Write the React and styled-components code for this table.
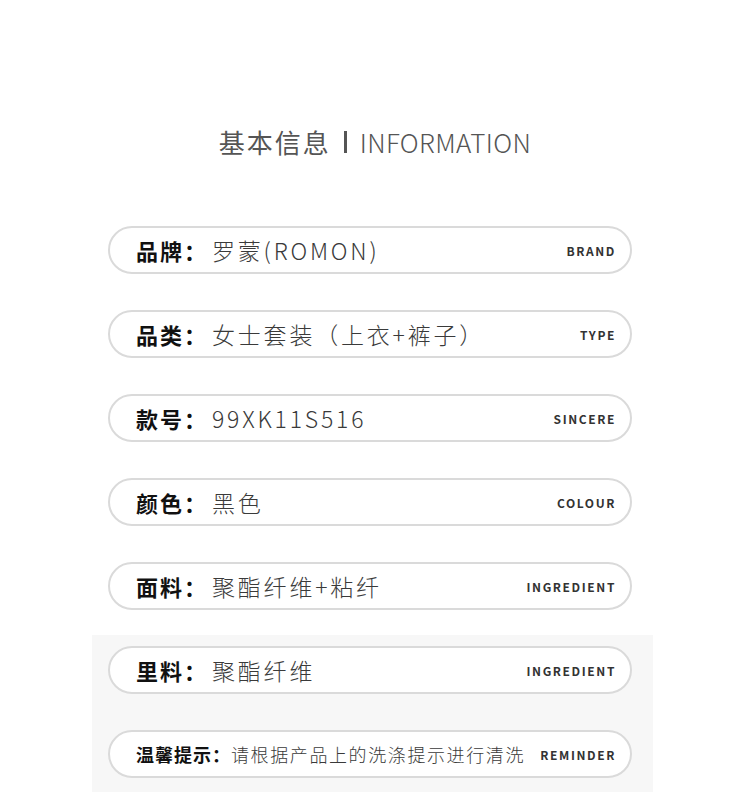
import React from "react";
import styled, { createGlobalStyle } from "styled-components";

const GlobalStyle = createGlobalStyle`
  html, body {
    margin: 0;
    padding: 0;
    background: #ffffff;
  }
  body {
    font-family: "Noto Sans CJK SC", "Noto Sans", sans-serif;
  }
`;

const Page = styled.div`
  width: 750px;
  height: 804px;
  padding-top: 127px;
  box-sizing: border-box;
  overflow: hidden;
`;

const Title = styled.h1`
  margin: 0;
  display: flex;
  align-items: center;
  justify-content: center;
  height: 30px;
  font-size: 26px;
  font-weight: 400;
  color: #555;
  line-height: 30px;
`;

const TitleCn = styled.span`
  letter-spacing: 2px;
`;

const TitleBar = styled.span`
  display: inline-block;
  width: 3px;
  height: 22px;
  background: #555;
  margin: 0 13px 0 13px;
`;

const TitleEn = styled.span`
  font-weight: 300;
  letter-spacing: 0.35px;
`;

const List = styled.div`
  margin: 69px 0 0 108px;
  width: 524px;
  display: flex;
  flex-direction: column;
  gap: 36px;
`;

const Shade = styled.div`
  margin: -11px -21px 0 -16px;
  padding: 11px 21px 14px 16px;
  background: #f7f7f7;
  display: flex;
  flex-direction: column;
  gap: 36px;
`;

const Pill = styled.div`
  height: 48px;
  box-sizing: border-box;
  border: 2px solid #dadada;
  border-radius: 24px;
  background: #fff;
  display: flex;
  align-items: center;
  padding: 0 16px 0 26px;
`;

const Label = styled.span`
  font-weight: 700;
  color: #111;
  font-size: ${(p) => (p.small ? "18px" : "22px")};
  letter-spacing: ${(p) => (p.small ? "1px" : "2px")};
  white-space: nowrap;
`;

const Value = styled.span`
  flex: 1;
  min-width: 0;
  margin-left: ${(p) => (p.small ? "0" : "4px")};
  font-weight: 300;
  color: #3a3a3a;
  font-size: ${(p) => (p.small ? "18px" : "23px")};
  letter-spacing: ${(p) => (p.small ? "1.6px" : "2.8px")};
  white-space: nowrap;
`;

const Tag = styled.span`
  font-size: 12px;
  font-weight: 700;
  color: #333;
  letter-spacing: 1.6px;
  margin-right: -2px;
`;

const rows = [
  { label: "品牌：", value: "罗蒙(ROMON)", tag: "BRAND" },
  { label: "品类：", value: "女士套装（上衣+裤子）", tag: "TYPE" },
  { label: "款号：", value: "99XK11S516", tag: "SINCERE" },
  { label: "颜色：", value: "黑色", tag: "COLOUR" },
  { label: "面料：", value: "聚酯纤维+粘纤", tag: "INGREDIENT" },
];

const shaded = [
  { label: "里料：", value: "聚酯纤维", tag: "INGREDIENT" },
  {
    label: "温馨提示：",
    value: "请根据产品上的洗涤提示进行清洗",
    tag: "REMINDER",
    small: true,
  },
];

function Row({ label, value, tag, small }) {
  return (
    <Pill>
      <Label small={small}>{label}</Label>
      <Value small={small}>{value}</Value>
      <Tag>{tag}</Tag>
    </Pill>
  );
}

export default function App() {
  return (
    <Page>
      <GlobalStyle />
      <Title>
        <TitleCn>基本信息</TitleCn>
        <TitleBar />
        <TitleEn>INFORMATION</TitleEn>
      </Title>
      <List>
        {rows.map((r) => (
          <Row key={r.tag + r.label} {...r} />
        ))}
        <Shade>
          {shaded.map((r) => (
            <Row key={r.tag + r.label} {...r} />
          ))}
        </Shade>
      </List>
    </Page>
  );
}
